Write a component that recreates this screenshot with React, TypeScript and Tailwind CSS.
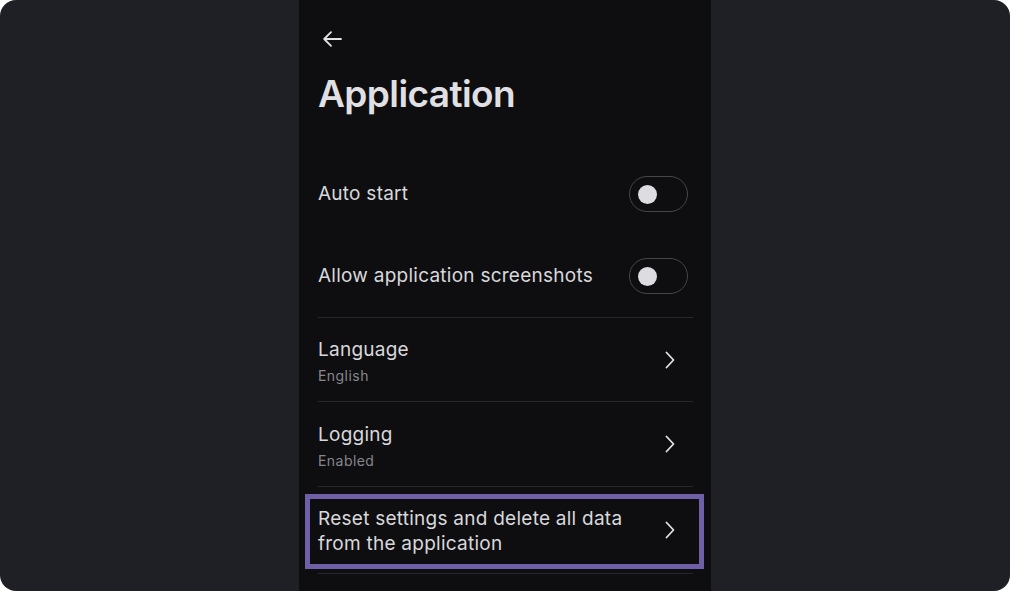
import React from 'react';

const Toggle: React.FC = () => (
    <div className="w-[59px] h-[36px] rounded-full border-[1.5px] border-[#46464b] flex items-center pl-[8px]">
        <div className="w-[19px] h-[19px] rounded-full bg-[#dddde1]"></div>
    </div>
);

const Chevron: React.FC = () => (
    <svg width="10" height="18" viewBox="0 0 10 18" fill="none" className="mr-[18px] shrink-0">
        <path d="M1.5 1.5 L8.5 9 L1.5 16.5" stroke="#e2e2e5" strokeWidth="1.8" strokeLinecap="round" strokeLinejoin="round" />
    </svg>
);

const ToggleRow: React.FC<{ label: string }> = ({ label }) => (
    <div className="h-[82px] flex items-center justify-between pr-[5px]">
        <span className="text-[19px] text-[#d8d8dc] tracking-[0.25px]">{label}</span>
        <Toggle />
    </div>
);

const LinkRow: React.FC<{ label: string, value: string, last?: boolean }> = ({ label, value, last }) => (
    <div className={`${last ? 'h-[85px]' : 'h-[84px]'} flex items-center justify-between border-b border-[#28282c]`}>
        <div className="flex flex-col gap-[1px] pt-[6px]">
            <span className="text-[19px] leading-[26px] text-[#d8d8dc] tracking-[0.25px]">{label}</span>
            <span className="text-[14px] leading-[24px] text-[#86868c] tracking-[0.45px]">{value}</span>
        </div>
        <Chevron />
    </div>
);

export default function App() {
    return (
        <div className="w-[1010px] h-[591px] bg-white" style={{ fontFamily: 'Inter, "Liberation Sans", sans-serif' }}>
            <div className="w-full h-full rounded-[16px] bg-[#1f2026] flex justify-center overflow-hidden">
                <div className="w-[412px] h-full bg-[#0e0e10] pl-[19px] pr-[18px]">
                    {/* Back */}
                    <div className="pt-[31px] pl-[5px]">
                        <svg width="19" height="16" viewBox="0 0 19 16" fill="none">
                            <path d="M18 8 H1.5 M8 1.2 L1.2 8 L8 14.8" stroke="#e2e2e5" strokeWidth="1.8" strokeLinecap="round" strokeLinejoin="round" />
                        </svg>
                    </div>

                    <h1 className="mt-[24px] text-[37px] leading-[46px] font-semibold text-[#e0e0e4] tracking-[-0.6px]">Application</h1>

                    <div className="mt-[36px]">
                        <ToggleRow label="Auto start" />
                        <ToggleRow label="Allow application screenshots" />
                    </div>

                    <div className="border-t border-[#28282c]">
                        <LinkRow label="Language" value="English" />
                        <LinkRow label="Logging" value="Enabled" last />

                        {/* Reset row */}
                        <div className="relative h-[87px] flex items-center justify-between border-b border-[#28282c]">
                            <span className="text-[19px] leading-[25px] text-[#d8d8dc] tracking-[0.25px] w-[330px] pt-[2px]">
                                Reset settings and delete all data from the application
                            </span>
                            <Chevron />
                            <div className="absolute -left-[13px] -right-[11px] top-[7px] bottom-[4px] border-[5px] border-[#6f5fa7] pointer-events-none"></div>
                        </div>
                    </div>
                </div>
            </div>
        </div>
    );
}
